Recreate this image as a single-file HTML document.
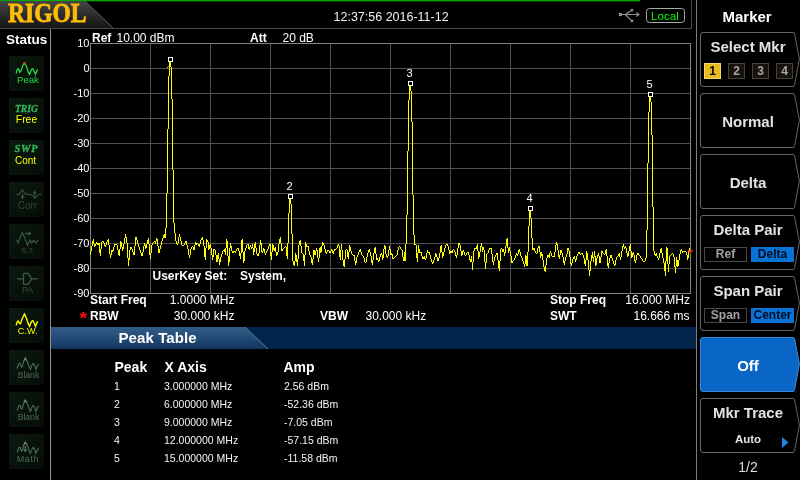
<!DOCTYPE html>
<html><head><meta charset="utf-8"><title>RIGOL Spectrum Analyzer - Marker Peak Table</title>
<style>
html,body{margin:0;padding:0;background:#000;}
body{width:800px;height:480px;overflow:hidden;position:relative;font-family:"Liberation Sans",sans-serif;color:#fff;}
#scr{position:absolute;left:0;top:0;width:800px;height:480px;overflow:hidden;will-change:transform;}
svg{position:absolute;left:0;top:0;}
.t{position:absolute;white-space:nowrap;line-height:1;margin:0;padding:0;}
.b{font-weight:bold;}
.g{font-size:12px;}
.ax{font-size:11px;text-align:right;width:40px;}
.mk{font-size:11px;text-align:center;width:20px;}
.menu{font-size:15px;font-weight:bold;color:#e2e2e2;text-align:center;width:96px;left:700px;}
.row{font-size:10.5px;color:#f4f4f4;}
.hd{font-size:14px;font-weight:bold;}
.st{font-size:10px;text-align:center;width:36px;left:9px;}
.opt{position:absolute;box-sizing:border-box;height:15px;font-size:12px;font-weight:bold;text-align:center;line-height:13px;}
.off{background:#030303;border:1px solid #484848;color:#a0a0a0;}
.on{background:#0a74d6;border:1px solid #0a74d6;color:#000c24;}
.num{position:absolute;box-sizing:border-box;width:17px;height:16px;top:63px;font-size:12px;font-weight:bold;text-align:center;line-height:14px;}
.num.off{background:#17120c;border:1px solid #47423a;color:#a9a9a9;}
.num.on{background:#e9b91f;border:1px solid #f6d96a;color:#000;}
</style></head><body><div id="scr">

<svg width="800" height="480" viewBox="0 0 800 480">
<defs>
<linearGradient id="lg" x1="0" y1="0" x2="0" y2="1"><stop offset="0" stop-color="#454545"/><stop offset="0.5" stop-color="#2c2c2c"/><stop offset="1" stop-color="#141414"/></linearGradient>
<linearGradient id="pt" x1="0" y1="0" x2="0" y2="1"><stop offset="0" stop-color="#315d88"/><stop offset="0.5" stop-color="#244b75"/><stop offset="1" stop-color="#0f3560"/></linearGradient>
<linearGradient id="sb" x1="0" y1="0" x2="1" y2="1"><stop offset="0" stop-color="#0c1a0f"/><stop offset="0.5" stop-color="#08120a"/><stop offset="1" stop-color="#060d08"/></linearGradient>
</defs>
<rect x="0" y="0" width="640" height="1" fill="#00a800"/><rect x="0" y="1" width="640" height="1" fill="#003800"/>
<polygon points="0,1 85,1 113,28 0,28" fill="url(#lg)"/>
<line x1="85" y1="1" x2="113" y2="28" stroke="#5a5a5a" stroke-width="1"/>
<rect x="0" y="28" width="692" height="1" fill="#484848"/>
<rect x="691" y="0" width="1" height="29" fill="#484848"/>
<rect x="50" y="29" width="1" height="451" fill="#909090"/>
<rect x="696" y="0" width="1" height="480" fill="#7c7c7c"/>
<rect x="9" y="56" width="35" height="35" fill="url(#sb)"/>
<rect x="9" y="98" width="35" height="35" fill="url(#sb)"/>
<rect x="9" y="140" width="35" height="35" fill="url(#sb)"/>
<rect x="9" y="182" width="35" height="35" fill="url(#sb)"/>
<rect x="9" y="224" width="35" height="35" fill="url(#sb)"/>
<rect x="9" y="266" width="35" height="35" fill="url(#sb)"/>
<rect x="9" y="308" width="35" height="35" fill="url(#sb)"/>
<rect x="9" y="350" width="35" height="35" fill="url(#sb)"/>
<rect x="9" y="392" width="35" height="35" fill="url(#sb)"/>
<rect x="9" y="434" width="35" height="35" fill="url(#sb)"/>
<path d="M90.5,43V294 M150.5,43V294 M210.5,43V294 M270.5,43V294 M330.5,43V294 M390.5,43V294 M450.5,43V294 M510.5,43V294 M570.5,43V294 M630.5,43V294 M690.5,43V294 M90,43.5H691 M90,68.5H691 M90,93.5H691 M90,118.5H691 M90,143.5H691 M90,168.5H691 M90,193.5H691 M90,218.5H691 M90,243.5H691 M90,268.5H691 M90,293.5H691" stroke="#505150" stroke-width="1" fill="none"/>
<path d="M90.5,43V294M90,293.5H691M690.5,43V294M90,43.5H691" stroke="#828282" stroke-width="1" fill="none"/>
<path d="M90,251h1v4h-1zM91,246h1v5h-1zM92,241h1v5h-1zM93,239h1v5h-1zM94,244h1v3h-1zM95,244h1v2h-1zM96,242h1v2h-1zM97,243h1v2h-1zM98,243h1v2h-1zM99,243h1v10h-1zM100,249h1v7h-1zM101,242h1v7h-1zM102,241h1v1h-1zM103,241h1v2h-1zM104,243h1v3h-1zM105,245h1v2h-1zM106,242h1v3h-1zM107,240h1v2h-1zM108,239h1v6h-1zM109,245h1v9h-1zM110,254h1v4h-1zM111,250h1v5h-1zM112,250h1v2h-1zM113,247h1v4h-1zM114,244h1v3h-1zM115,244h1v1h-1zM116,244h1v1h-1zM117,245h1v5h-1zM118,250h1v5h-1zM119,249h1v7h-1zM120,241h1v8h-1zM121,242h1v5h-1zM122,247h1v4h-1zM123,244h1v5h-1zM124,238h1v6h-1zM125,234h1v4h-1zM126,237h1v6h-1zM127,243h1v15h-1zM128,258h1v8h-1zM129,250h1v10h-1zM130,247h1v3h-1zM131,247h1v2h-1zM132,249h1v3h-1zM133,252h1v3h-1zM134,246h1v9h-1zM135,237h1v9h-1zM136,237h1v3h-1zM137,240h1v4h-1zM138,244h1v3h-1zM139,247h1v3h-1zM140,250h1v3h-1zM141,253h1v3h-1zM142,252h1v4h-1zM143,246h1v6h-1zM144,243h1v3h-1zM145,245h1v4h-1zM146,244h1v4h-1zM147,240h1v4h-1zM148,238h1v6h-1zM149,244h1v11h-1zM150,253h1v6h-1zM151,245h1v8h-1zM152,243h1v2h-1zM153,242h1v1h-1zM154,241h1v1h-1zM155,241h1v3h-1zM156,238h1v3h-1zM157,239h1v7h-1zM158,246h1v7h-1zM159,249h1v4h-1zM160,245h1v4h-1zM161,241h1v4h-1zM162,238h1v3h-1zM163,235h1v3h-1zM164,234h1v4h-1zM165,228h1v10h-1zM166,193h1v35h-1zM167,129h1v64h-1zM168,76h1v53h-1zM169,62h1v14h-1zM170,62h1v5h-1zM171,67h1v32h-1zM172,99h1v71h-1zM173,170h1v53h-1zM174,223h1v10h-1zM175,233h1v8h-1zM176,241h1v3h-1zM177,243h1v2h-1zM178,237h1v6h-1zM179,234h1v3h-1zM180,237h1v4h-1zM181,241h1v4h-1zM182,245h1v1h-1zM183,245h1v1h-1zM184,243h1v2h-1zM185,241h1v2h-1zM186,241h1v4h-1zM187,245h1v4h-1zM188,249h1v6h-1zM189,255h1v3h-1zM190,249h1v6h-1zM191,247h1v2h-1zM192,246h1v1h-1zM193,247h1v3h-1zM194,245h1v5h-1zM195,242h1v3h-1zM196,243h1v2h-1zM197,243h1v1h-1zM198,244h1v2h-1zM199,244h1v3h-1zM200,240h1v4h-1zM201,238h1v2h-1zM202,237h1v3h-1zM203,240h1v6h-1zM204,246h1v11h-1zM205,248h1v12h-1zM206,239h1v9h-1zM207,240h1v2h-1zM208,242h1v8h-1zM209,245h1v4h-1zM210,244h1v4h-1zM211,248h1v7h-1zM212,255h1v5h-1zM213,249h1v8h-1zM214,249h1v1h-1zM215,250h1v5h-1zM216,255h1v7h-1zM217,255h1v7h-1zM218,253h1v6h-1zM219,259h1v6h-1zM220,257h1v5h-1zM221,254h1v3h-1zM222,251h1v3h-1zM223,250h1v1h-1zM224,249h1v3h-1zM225,248h1v7h-1zM226,239h1v9h-1zM227,241h1v15h-1zM228,256h1v10h-1zM229,248h1v14h-1zM230,243h1v5h-1zM231,246h1v5h-1zM232,251h1v2h-1zM233,251h1v2h-1zM234,251h1v1h-1zM235,251h1v2h-1zM236,249h1v2h-1zM237,248h1v1h-1zM238,248h1v3h-1zM239,251h1v5h-1zM240,253h1v6h-1zM241,240h1v13h-1zM242,239h1v13h-1zM243,252h1v11h-1zM244,251h1v10h-1zM245,248h1v3h-1zM246,245h1v3h-1zM247,244h1v1h-1zM248,244h1v5h-1zM249,247h1v3h-1zM250,245h1v2h-1zM251,247h1v2h-1zM252,244h1v4h-1zM253,248h1v7h-1zM254,244h1v8h-1zM255,242h1v6h-1zM256,248h1v6h-1zM257,254h1v2h-1zM258,253h1v3h-1zM259,245h1v8h-1zM260,240h1v5h-1zM261,243h1v9h-1zM262,251h1v2h-1zM263,248h1v3h-1zM264,249h1v4h-1zM265,253h1v2h-1zM266,251h1v2h-1zM267,249h1v2h-1zM268,246h1v3h-1zM269,244h1v2h-1zM270,244h1v12h-1zM271,252h1v8h-1zM272,244h1v8h-1zM273,245h1v5h-1zM274,248h1v3h-1zM275,247h1v5h-1zM276,252h1v4h-1zM277,252h1v3h-1zM278,244h1v8h-1zM279,239h1v5h-1zM280,237h1v6h-1zM281,243h1v8h-1zM282,249h1v2h-1zM283,248h1v1h-1zM284,247h1v1h-1zM285,246h1v1h-1zM286,247h1v9h-1zM287,243h1v16h-1zM288,213h1v30h-1zM289,199h1v14h-1zM290,199h1v5h-1zM291,204h1v30h-1zM292,234h1v27h-1zM293,261h1v4h-1zM294,261h1v5h-1zM295,253h1v8h-1zM296,255h1v7h-1zM297,259h1v7h-1zM298,245h1v14h-1zM299,241h1v4h-1zM300,240h1v6h-1zM301,246h1v7h-1zM302,253h1v1h-1zM303,254h1v7h-1zM304,255h1v11h-1zM305,242h1v13h-1zM306,244h1v3h-1zM307,246h1v1h-1zM308,246h1v5h-1zM309,251h1v4h-1zM310,255h1v2h-1zM311,257h1v6h-1zM312,259h1v6h-1zM313,250h1v9h-1zM314,250h1v5h-1zM315,251h1v4h-1zM316,248h1v3h-1zM317,250h1v8h-1zM318,258h1v4h-1zM319,248h1v10h-1zM320,247h1v6h-1zM321,246h1v6h-1zM322,242h1v4h-1zM323,243h1v2h-1zM324,245h1v4h-1zM325,249h1v4h-1zM326,252h1v2h-1zM327,250h1v2h-1zM328,250h1v1h-1zM329,251h1v2h-1zM330,251h1v2h-1zM331,249h1v2h-1zM332,250h1v3h-1zM333,251h1v3h-1zM334,249h1v2h-1zM335,249h1v1h-1zM336,248h1v1h-1zM337,245h1v3h-1zM338,244h1v2h-1zM339,246h1v11h-1zM340,250h1v10h-1zM341,244h1v6h-1zM342,250h1v10h-1zM343,260h1v6h-1zM344,259h1v8h-1zM345,250h1v9h-1zM346,249h1v1h-1zM347,250h1v7h-1zM348,252h1v7h-1zM349,245h1v7h-1zM350,247h1v4h-1zM351,251h1v3h-1zM352,254h1v1h-1zM353,255h1v1h-1zM354,255h1v6h-1zM355,261h1v4h-1zM356,257h1v6h-1zM357,255h1v2h-1zM358,252h1v3h-1zM359,250h1v2h-1zM360,249h1v3h-1zM361,252h1v3h-1zM362,255h1v1h-1zM363,256h1v2h-1zM364,258h1v4h-1zM365,262h1v1h-1zM366,257h1v5h-1zM367,253h1v4h-1zM368,250h1v3h-1zM369,249h1v3h-1zM370,252h1v4h-1zM371,256h1v7h-1zM372,260h1v5h-1zM373,253h1v7h-1zM374,248h1v5h-1zM375,247h1v7h-1zM376,254h1v6h-1zM377,258h1v2h-1zM378,260h1v2h-1zM379,257h1v4h-1zM380,254h1v3h-1zM381,253h1v2h-1zM382,255h1v5h-1zM383,249h1v9h-1zM384,245h1v4h-1zM385,246h1v8h-1zM386,254h1v3h-1zM387,256h1v2h-1zM388,250h1v6h-1zM389,246h1v4h-1zM390,249h1v6h-1zM391,253h1v2h-1zM392,254h1v5h-1zM393,258h1v1h-1zM394,257h1v1h-1zM395,256h1v1h-1zM396,255h1v1h-1zM397,250h1v5h-1zM398,247h1v3h-1zM399,246h1v1h-1zM400,247h1v2h-1zM401,249h1v1h-1zM402,250h1v7h-1zM403,257h1v4h-1zM404,252h1v9h-1zM405,244h1v17h-1zM406,215h1v29h-1zM407,151h1v64h-1zM408,100h1v51h-1zM409,86h1v14h-1zM410,86h1v5h-1zM411,91h1v31h-1zM412,122h1v73h-1zM413,195h1v40h-1zM414,235h1v10h-1zM415,244h1v1h-1zM416,245h1v13h-1zM417,253h1v9h-1zM418,245h1v8h-1zM419,249h1v4h-1zM420,252h1v1h-1zM421,252h1v4h-1zM422,256h1v3h-1zM423,257h1v2h-1zM424,256h1v3h-1zM425,258h1v2h-1zM426,253h1v5h-1zM427,250h1v3h-1zM428,252h1v1h-1zM429,252h1v3h-1zM430,255h1v4h-1zM431,259h1v3h-1zM432,262h1v2h-1zM433,260h1v3h-1zM434,257h1v3h-1zM435,253h1v4h-1zM436,254h1v3h-1zM437,257h1v4h-1zM438,258h1v3h-1zM439,253h1v5h-1zM440,246h1v7h-1zM441,245h1v7h-1zM442,252h1v6h-1zM443,252h1v4h-1zM444,248h1v4h-1zM445,245h1v3h-1zM446,244h1v1h-1zM447,244h1v2h-1zM448,246h1v4h-1zM449,250h1v4h-1zM450,251h1v2h-1zM451,251h1v2h-1zM452,250h1v3h-1zM453,249h1v1h-1zM454,250h1v2h-1zM455,252h1v4h-1zM456,255h1v3h-1zM457,248h1v7h-1zM458,243h1v5h-1zM459,243h1v2h-1zM460,245h1v6h-1zM461,251h1v5h-1zM462,251h1v4h-1zM463,250h1v2h-1zM464,252h1v3h-1zM465,255h1v1h-1zM466,253h1v2h-1zM467,252h1v1h-1zM468,252h1v3h-1zM469,255h1v5h-1zM470,259h1v3h-1zM471,256h1v6h-1zM472,262h1v8h-1zM473,251h1v11h-1zM474,248h1v3h-1zM475,248h1v1h-1zM476,246h1v3h-1zM477,244h1v7h-1zM478,251h1v8h-1zM479,252h1v5h-1zM480,246h1v6h-1zM481,243h1v4h-1zM482,247h1v5h-1zM483,247h1v3h-1zM484,250h1v12h-1zM485,262h1v7h-1zM486,254h1v9h-1zM487,253h1v1h-1zM488,250h1v3h-1zM489,248h1v2h-1zM490,248h1v1h-1zM491,248h1v6h-1zM492,254h1v8h-1zM493,261h1v4h-1zM494,257h1v4h-1zM495,255h1v2h-1zM496,253h1v2h-1zM497,253h1v7h-1zM498,260h1v8h-1zM499,261h1v10h-1zM500,249h1v12h-1zM501,248h1v1h-1zM502,249h1v3h-1zM503,249h1v3h-1zM504,252h1v4h-1zM505,246h1v7h-1zM506,239h1v7h-1zM507,238h1v10h-1zM508,248h1v5h-1zM509,247h1v4h-1zM510,251h1v5h-1zM511,256h1v7h-1zM512,261h1v2h-1zM513,260h1v1h-1zM514,258h1v2h-1zM515,255h1v3h-1zM516,253h1v2h-1zM517,254h1v2h-1zM518,250h1v4h-1zM519,249h1v3h-1zM520,252h1v4h-1zM521,256h1v2h-1zM522,258h1v3h-1zM523,261h1v3h-1zM524,264h1v3h-1zM525,255h1v9h-1zM526,256h1v10h-1zM527,252h1v14h-1zM528,226h1v26h-1zM529,211h1v15h-1zM530,211h1v7h-1zM531,218h1v20h-1zM532,238h1v12h-1zM533,248h1v2h-1zM534,248h1v3h-1zM535,251h1v2h-1zM536,253h1v1h-1zM537,248h1v5h-1zM538,246h1v2h-1zM539,246h1v6h-1zM540,252h1v6h-1zM541,252h1v4h-1zM542,254h1v6h-1zM543,260h1v7h-1zM544,267h1v4h-1zM545,265h1v7h-1zM546,258h1v7h-1zM547,255h1v3h-1zM548,255h1v2h-1zM549,253h1v5h-1zM550,251h1v2h-1zM551,253h1v3h-1zM552,256h1v1h-1zM553,256h1v1h-1zM554,252h1v5h-1zM555,245h1v7h-1zM556,242h1v3h-1zM557,244h1v6h-1zM558,250h1v7h-1zM559,255h1v4h-1zM560,250h1v5h-1zM561,250h1v3h-1zM562,253h1v4h-1zM563,257h1v6h-1zM564,261h1v4h-1zM565,257h1v4h-1zM566,254h1v3h-1zM567,248h1v6h-1zM568,248h1v3h-1zM569,251h1v6h-1zM570,257h1v7h-1zM571,263h1v3h-1zM572,259h1v4h-1zM573,257h1v2h-1zM574,256h1v3h-1zM575,259h1v3h-1zM576,256h1v4h-1zM577,254h1v2h-1zM578,252h1v2h-1zM579,252h1v2h-1zM580,254h1v1h-1zM581,253h1v1h-1zM582,253h1v2h-1zM583,255h1v3h-1zM584,258h1v6h-1zM585,260h1v6h-1zM586,251h1v9h-1zM587,253h1v7h-1zM588,260h1v10h-1zM589,270h1v6h-1zM590,261h1v10h-1zM591,255h1v6h-1zM592,252h1v6h-1zM593,257h1v5h-1zM594,251h1v6h-1zM595,256h1v10h-1zM596,258h1v7h-1zM597,255h1v3h-1zM598,253h1v3h-1zM599,256h1v7h-1zM600,257h1v6h-1zM601,251h1v6h-1zM602,251h1v2h-1zM603,253h1v1h-1zM604,254h1v1h-1zM605,250h1v4h-1zM606,249h1v7h-1zM607,256h1v10h-1zM608,263h1v5h-1zM609,258h1v5h-1zM610,255h1v3h-1zM611,255h1v3h-1zM612,258h1v3h-1zM613,261h1v3h-1zM614,264h1v2h-1zM615,260h1v5h-1zM616,257h1v3h-1zM617,256h1v1h-1zM618,254h1v2h-1zM619,253h1v4h-1zM620,257h1v3h-1zM621,251h1v6h-1zM622,246h1v5h-1zM623,244h1v3h-1zM624,247h1v2h-1zM625,246h1v2h-1zM626,248h1v5h-1zM627,253h1v4h-1zM628,251h1v5h-1zM629,246h1v5h-1zM630,244h1v7h-1zM631,251h1v7h-1zM632,253h1v4h-1zM633,252h1v3h-1zM634,255h1v6h-1zM635,260h1v3h-1zM636,255h1v5h-1zM637,253h1v2h-1zM638,253h1v2h-1zM639,255h1v1h-1zM640,256h1v2h-1zM641,258h1v1h-1zM642,259h1v2h-1zM643,261h1v1h-1zM644,261h1v1h-1zM645,258h1v3h-1zM646,230h1v28h-1zM647,163h1v67h-1zM648,112h1v51h-1zM649,97h1v15h-1zM650,97h1v5h-1zM651,102h1v33h-1zM652,135h1v72h-1zM653,207h1v44h-1zM654,251h1v4h-1zM655,254h1v2h-1zM656,253h1v3h-1zM657,256h1v2h-1zM658,258h1v2h-1zM659,253h1v5h-1zM660,249h1v4h-1zM661,248h1v5h-1zM662,253h1v5h-1zM663,258h1v5h-1zM664,263h1v8h-1zM665,261h1v15h-1zM666,247h1v14h-1zM667,248h1v16h-1zM668,264h1v8h-1zM669,256h1v8h-1zM670,255h1v1h-1zM671,254h1v1h-1zM672,253h1v1h-1zM673,254h1v3h-1zM674,257h1v10h-1zM675,266h1v7h-1zM676,257h1v9h-1zM677,260h1v7h-1zM678,260h1v6h-1zM679,254h1v6h-1zM680,250h1v4h-1zM681,249h1v2h-1zM682,251h1v2h-1zM683,251h1v1h-1zM684,251h1v1h-1zM685,251h1v1h-1zM686,252h1v3h-1zM687,255h1v5h-1zM688,251h1v7h-1zM689,248h1v3h-1z" fill="#ffff00" shape-rendering="crispEdges"/>
<rect x="168.5" y="57.5" width="4" height="4" fill="#000" stroke="#fff" stroke-width="1" shape-rendering="crispEdges"/>
<rect x="288.5" y="194.5" width="4" height="4" fill="#000" stroke="#fff" stroke-width="1" shape-rendering="crispEdges"/>
<rect x="408.5" y="81.5" width="4" height="4" fill="#000" stroke="#fff" stroke-width="1" shape-rendering="crispEdges"/>
<rect x="528.5" y="206.5" width="4" height="4" fill="#000" stroke="#fff" stroke-width="1" shape-rendering="crispEdges"/>
<rect x="648.5" y="92.5" width="4" height="4" fill="#000" stroke="#fff" stroke-width="1" shape-rendering="crispEdges"/>
<path d="M167,68l1.6,-1.6" stroke="#d8d8d8" stroke-width="1" fill="none"/>
<path d="M688,250.2L690.4,252.4L692.8,250.2" stroke="#ff2020" stroke-width="1.2" fill="none"/>
<rect x="51" y="327" width="645" height="22" fill="#03244a"/>
<polygon points="51,327 245,327 268,349 51,349" fill="url(#pt)"/>
<line x1="245" y1="327" x2="268" y2="349" stroke="#4f7ea8" stroke-width="1"/>
<path d="M703.0,32.5H793.3Q794.3,32.5 794.5999999999999,34L799.4,59.0L794.5999999999999,84.5Q794.3,86.5 793.3,86.5H703.0Q700.5,86.5 700.5,84.0V35.0Q700.5,32.5 703.0,32.5Z" fill="#000" stroke="#666" stroke-width="1"/>
<path d="M703.0,93.5H793.3Q794.3,93.5 794.5999999999999,95L799.4,120.0L794.5999999999999,145.5Q794.3,147.5 793.3,147.5H703.0Q700.5,147.5 700.5,145.0V96.0Q700.5,93.5 703.0,93.5Z" fill="#000" stroke="#666" stroke-width="1"/>
<path d="M703.0,154.5H793.3Q794.3,154.5 794.5999999999999,156L799.4,181.0L794.5999999999999,206.5Q794.3,208.5 793.3,208.5H703.0Q700.5,208.5 700.5,206.0V157.0Q700.5,154.5 703.0,154.5Z" fill="#000" stroke="#666" stroke-width="1"/>
<path d="M703.0,215.5H793.3Q794.3,215.5 794.5999999999999,217L799.4,242.0L794.5999999999999,267.5Q794.3,269.5 793.3,269.5H703.0Q700.5,269.5 700.5,267.0V218.0Q700.5,215.5 703.0,215.5Z" fill="#000" stroke="#666" stroke-width="1"/>
<path d="M703.0,276.5H793.3Q794.3,276.5 794.5999999999999,278L799.4,303.0L794.5999999999999,328.5Q794.3,330.5 793.3,330.5H703.0Q700.5,330.5 700.5,328.0V279.0Q700.5,276.5 703.0,276.5Z" fill="#000" stroke="#666" stroke-width="1"/>
<path d="M703.0,337.5H793.3Q794.3,337.5 794.5999999999999,339L799.4,364.0L794.5999999999999,389.5Q794.3,391.5 793.3,391.5H703.0Q700.5,391.5 700.5,389.0V340.0Q700.5,337.5 703.0,337.5Z" fill="#0a66c6" stroke="#3b86d6" stroke-width="1"/>
<path d="M703.0,398.5H793.3Q794.3,398.5 794.5999999999999,400L799.4,425.0L794.5999999999999,450.5Q794.3,452.5 793.3,452.5H703.0Q700.5,452.5 700.5,450.0V401.0Q700.5,398.5 703.0,398.5Z" fill="#000" stroke="#666" stroke-width="1"/>
<polygon points="782,437 788.5,442.5 782,448" fill="#1a86e0"/>
<g stroke="#909090" stroke-width="1.1" fill="none"><path d="M621.5,14.5H637M625.3,14.5L631.7,10.2M625.3,14.5L631.7,20.8"/></g>
<rect x="618.8" y="12.9" width="3.2" height="3.2" fill="#909090"/><polygon points="636,11.8 640,14.5 636,17.2 637,14.5" fill="#909090"/><rect x="630.8" y="8.9" width="2.4" height="2.4" fill="#909090"/><rect x="630.8" y="19.7" width="2.4" height="2.4" fill="#909090"/>
<rect x="646.5" y="8.5" width="38" height="14" rx="3" ry="3" fill="#000" stroke="#a8a8a8" stroke-width="1"/>
<path d="M16.2,73.4 L17.0,69.8 L18.1,68.7 L19.1,69.8 L19.8,72.2 L20.9,71.2 L22.3,67.0 L23.3,64.7 L24.4,63.2 L25.8,65.1 L27.0,67.9 L28.2,72.2 L29.6,74.3 L30.8,70.8 L32.0,68.9 L32.9,68.7 L34.1,71.2 L35.5,74.3 L36.9,70.8 L37.6,69.3" stroke="#22d844" stroke-width="1.3" fill="none"/>
<rect x="23.4" y="62.4" width="2.2" height="2.2" fill="#ff3a2a"/>
<path d="M16.2,325.4 L17.0,322.3 L18.1,320.9 L19.5,323.2 L20.5,323.7 L21.9,319.5 L23.3,316.2 L24.4,314.1 L25.8,316.7 L27.0,319.9 L28.4,324.2 L29.6,326.3 L30.8,322.8 L32.2,320.7 L33.1,320.9 L34.2,323.2 L35.5,326.3 L36.9,322.8 L37.6,321.3" stroke="#ffff00" stroke-width="1.4" fill="none"/>
<path d="M17.2,368.5 L18.6,363.8 L20.0,363.3 L21.4,367.1 L22.3,366.2 L23.8,361.0 L25.2,357.7 L26.6,360.1 L28.0,363.3 L29.2,367.1 L30.5,369.4 L31.7,365.7 L33.1,363.3 L34.5,364.8 L35.9,369.4 L37.3,366.2 L38.6,363.8" stroke="#4c6c5c" stroke-width="1.1" fill="none"/>
<path d="M17.2,410.5 L18.6,405.8 L20.0,405.3 L21.4,409.1 L22.3,408.2 L23.8,403.0 L25.2,399.7 L26.6,402.1 L28.0,405.3 L29.2,409.1 L30.5,411.4 L31.7,407.7 L33.1,405.3 L34.5,406.8 L35.9,411.4 L37.3,408.2 L38.6,405.8" stroke="#4c6c5c" stroke-width="1.1" fill="none"/>
<path d="M17.2,452.5 L18.6,447.8 L20.0,447.3 L21.4,451.1 L22.3,450.2 L23.8,445.0 L25.2,441.7 L26.6,444.1 L28.0,447.3 L29.2,451.1 L30.5,453.4 L31.7,449.7 L33.1,447.3 L34.5,448.8 L35.9,453.4 L37.3,450.2 L38.6,447.8" stroke="#4c6c5c" stroke-width="1.1" fill="none"/>
<path d="M24.2,360.5l1,-2l1,2M24.2,402.5l1,-2l1,2M24.2,444.5l1,-2l1,2M25.2,446v5M23.6,449.5l1.6,2l1.6,-2" stroke="#7f9a8c" stroke-width="0.9" fill="none"/>
<path d="M16.2,194.7L19,194.4L22.3,189.7L25.2,193.9L31.7,194.7L35,198.1L38.3,194.7L41,194.4M22.5,193.5v4M20.9,196l1.6,2.2l1.6,-2.2M34.7,196.5v-4M33.1,193.7l1.6,-2.2l1.6,2.2" stroke="#3c5144" stroke-width="1.1" fill="none"/>
<path d="M16.2,239.7 L18.1,243.0 L20.0,237.8 L22.3,232.7 L24.7,237.8 L27.5,245.3 L29.8,240.2 L31.7,243.0 L33.6,240.2 L35.9,243.0 L38.3,239.7M25,233.6h5M28.6,232l1.8,1.6l-1.8,1.6" stroke="#3c5a4a" stroke-width="1.1" fill="none"/>
<path d="M17.2,278.9H23.5M23.5,273.4V284.3H28L31.7,278.9L28,273.4H23.5M31.7,278.9H37.8" stroke="#3f5a4c" stroke-width="1.3" fill="none"/>
</svg>
<div class="t b" style="left:8px;top:-0.6px;font-family:'Liberation Serif',serif;font-size:27.5px;color:#fdbc08;-webkit-text-stroke:0.8px #fdbc08;transform:scaleX(0.855);transform-origin:0 0;">RIGOL</div>
<div class="t " style="left:333.5px;top:10.6px;font-size:12.5px;color:#f0f0f0;">12:37:56 2016-11-12</div>
<div class="t " style="left:651px;top:10.2px;font-size:11.6px;color:#00ff00;">Local</div>
<div class="t b" style="left:722.5px;top:9px;font-size:15px;">Marker</div>
<div class="t b" style="left:6px;top:33px;font-size:13.5px;">Status</div>
<div class="t g b" style="left:92px;top:31.5px;">Ref</div>
<div class="t g" style="left:116.5px;top:31.5px;">10.00 dBm</div>
<div class="t g b" style="left:250px;top:31.5px;">Att</div>
<div class="t g" style="left:282.5px;top:31.5px;">20 dB</div>
<div class="t ax" style="left:49.5px;top:37.5px;">10</div>
<div class="t ax" style="left:49.5px;top:62.5px;">0</div>
<div class="t ax" style="left:49.5px;top:87.5px;">-10</div>
<div class="t ax" style="left:49.5px;top:112.5px;">-20</div>
<div class="t ax" style="left:49.5px;top:137.5px;">-30</div>
<div class="t ax" style="left:49.5px;top:162.5px;">-40</div>
<div class="t ax" style="left:49.5px;top:187.5px;">-50</div>
<div class="t ax" style="left:49.5px;top:212.5px;">-60</div>
<div class="t ax" style="left:49.5px;top:237.5px;">-70</div>
<div class="t ax" style="left:49.5px;top:262.5px;">-80</div>
<div class="t ax" style="left:49.5px;top:287.5px;">-90</div>
<div class="t g b" style="left:152.5px;top:269.5px;">UserKey Set:</div>
<div class="t g b" style="left:240px;top:269.5px;">System,</div>
<div class="t g b" style="left:90px;top:294px;">Start Freq</div>
<div class="t g" style="left:134.5px;top:294px;width:100px;text-align:right;">1.0000 MHz</div>
<div class="t g b" style="left:90px;top:309.5px;">RBW</div>
<div class="t g" style="left:134.5px;top:309.5px;width:100px;text-align:right;">30.000 kHz</div>
<div class="t b" style="left:79.3px;top:310.2px;font-size:21px;color:#ff0a0a;transform:scaleY(0.8);transform-origin:0 0;">*</div>
<div class="t g b" style="left:320px;top:309.5px;">VBW</div>
<div class="t g" style="left:365.5px;top:309.5px;">30.000 kHz</div>
<div class="t g b" style="left:550px;top:294px;">Stop Freq</div>
<div class="t g" style="left:590px;top:294px;width:100px;text-align:right;">16.000 MHz</div>
<div class="t g b" style="left:550px;top:309.5px;">SWT</div>
<div class="t g" style="left:589.5px;top:309.5px;width:100px;text-align:right;">16.666 ms</div>
<div class="t mk" style="left:279.5px;top:181px;">2</div>
<div class="t mk" style="left:399.5px;top:68px;">3</div>
<div class="t mk" style="left:519.5px;top:193px;">4</div>
<div class="t mk" style="left:639.5px;top:79px;">5</div>
<div class="t b" style="left:118.5px;top:330px;font-size:15px;letter-spacing:0.1px;">Peak Table</div>
<div class="t hd" style="left:114.5px;top:360px;">Peak</div>
<div class="t hd" style="left:164.5px;top:360px;">X Axis</div>
<div class="t hd" style="left:283.5px;top:360px;">Amp</div>
<div class="t row" style="left:114px;top:381px;">1</div>
<div class="t row" style="left:164px;top:381px;">3.000000 MHz</div>
<div class="t row" style="left:284px;top:381px;">2.56 dBm</div>
<div class="t row" style="left:114px;top:399px;">2</div>
<div class="t row" style="left:164px;top:399px;">6.000000 MHz</div>
<div class="t row" style="left:284px;top:399px;">-52.36 dBm</div>
<div class="t row" style="left:114px;top:417px;">3</div>
<div class="t row" style="left:164px;top:417px;">9.000000 MHz</div>
<div class="t row" style="left:284px;top:417px;">-7.05 dBm</div>
<div class="t row" style="left:114px;top:435px;">4</div>
<div class="t row" style="left:164px;top:435px;">12.000000 MHz</div>
<div class="t row" style="left:284px;top:435px;">-57.15 dBm</div>
<div class="t row" style="left:114px;top:453px;">5</div>
<div class="t row" style="left:164px;top:453px;">15.000000 MHz</div>
<div class="t row" style="left:284px;top:453px;">-11.58 dBm</div>
<div class="t" style="left:17px;top:75px;color:#22d844;font-size:9.6px;">Peak</div>
<div class="t" style="left:15px;top:103.5px;color:#35b858;font-size:9.6px;font-family:'Liberation Serif',serif;font-style:italic;font-weight:bold;-webkit-text-stroke:0.3px #35b858;">TRIG</div>
<div class="t" style="left:15.8px;top:115px;color:#ffff00;font-size:10.4px;">Free</div>
<div class="t" style="left:14.4px;top:144px;color:#35b858;font-size:10.6px;font-family:'Liberation Serif',serif;font-style:italic;font-weight:bold;letter-spacing:0.7px;-webkit-text-stroke:0.3px #35b858;">SWP</div>
<div class="t" style="left:15px;top:156px;color:#ffff00;font-size:10px;">Cont</div>
<div class="t" style="left:17.7px;top:201px;color:#33483a;font-size:10px;">Corr</div>
<div class="t" style="left:20.9px;top:246.5px;color:#33503f;font-size:8px;">S.T.</div>
<div class="t" style="left:21.9px;top:285.5px;color:#33503f;font-size:9px;">PA</div>
<div class="t" style="left:17.7px;top:327px;color:#ffff00;font-size:9px;letter-spacing:0.2px;">C.W.</div>
<div class="t" style="left:17.7px;top:371px;color:#4c6c5c;font-size:8.6px;">Blank</div>
<div class="t" style="left:17.7px;top:413px;color:#4c6c5c;font-size:8.6px;">Blank</div>
<div class="t" style="left:16.7px;top:454.5px;color:#4c6c5c;font-size:9px;letter-spacing:0.6px;">Math</div>
<div class="t menu" style="top:38.5px;">Select Mkr</div>
<div class="num on" style="left:704px;">1</div>
<div class="num off" style="left:728px;">2</div>
<div class="num off" style="left:752px;">3</div>
<div class="num off" style="left:776px;">4</div>
<div class="t menu" style="top:113.5px;">Normal</div>
<div class="t menu" style="top:174.5px;">Delta</div>
<div class="t menu" style="top:221.5px;">Delta Pair</div>
<div class="opt off" style="left:704px;top:246.5px;width:43px;">Ref</div>
<div class="opt on" style="left:751px;top:246.5px;width:43px;">Delta</div>
<div class="t menu" style="top:283px;">Span Pair</div>
<div class="opt off" style="left:704px;top:307.5px;width:43px;">Span</div>
<div class="opt on" style="left:751px;top:307.5px;width:43px;">Center</div>
<div class="t menu" style="top:357.5px;color:#fff;">Off</div>
<div class="t menu" style="top:404.5px;">Mkr Trace</div>
<div class="t menu" style="top:433.5px;font-size:11.5px;">Auto</div>
<div class="t" style="left:700px;width:96px;text-align:center;top:460px;font-size:14px;color:#dcdcdc;">1/2</div>
</div></body></html>
